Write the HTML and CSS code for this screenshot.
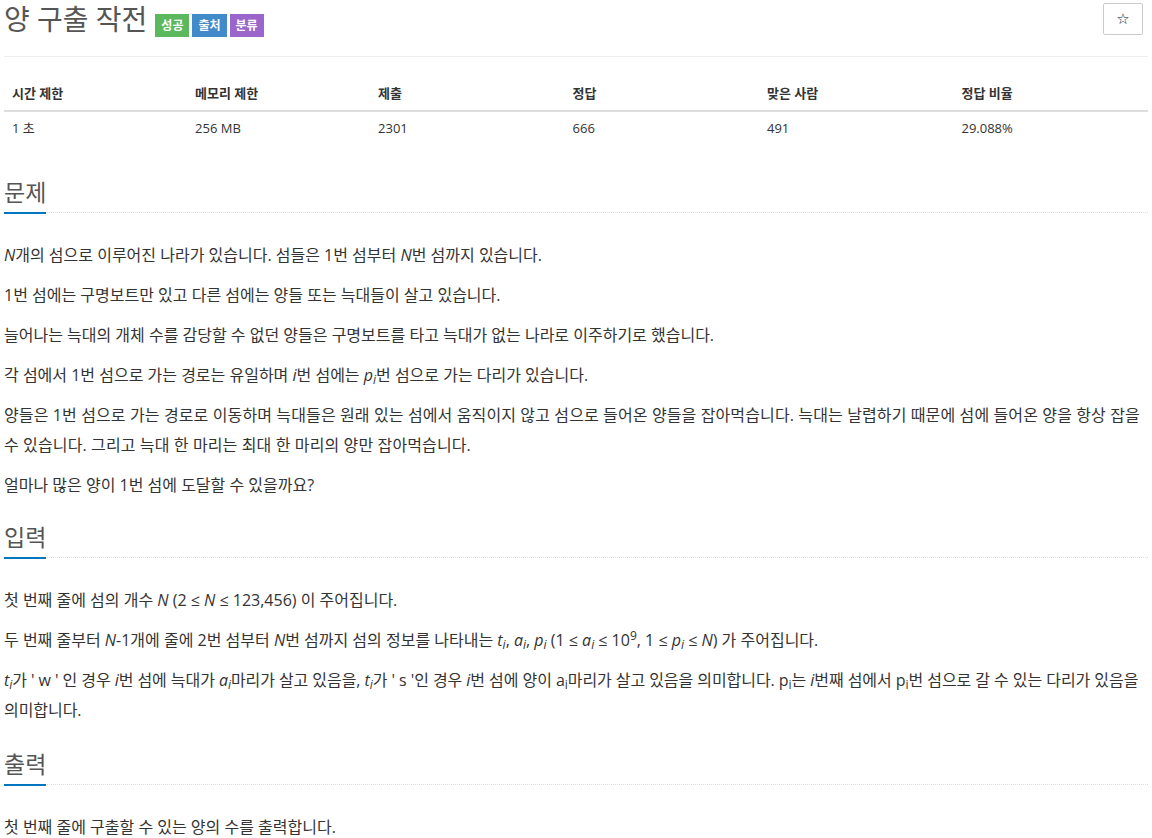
FILE: index.html
```html
<!DOCTYPE html>
<html>
<head>
    <title>양 구출 작전</title>
    <link rel="stylesheet" href="styles.css">
</head>
<body>
    <div class="container">
        <div class="page-header">
            <h1 class="problem-title">양 구출 작전</h1>
            <div class="labels">
                <span class="label label-success">성공</span>
                <span class="label label-info">출처</span>
                <span class="label label-purple">분류</span>
            </div>
            <button class="star-btn" title="즐겨찾기">☆</button>
        </div>

        <table class="problem-info">
            <thead>
                <tr>
                    <th class="w16">시간 제한</th>
                    <th class="w16">메모리 제한</th>
                    <th class="w17">제출</th>
                    <th class="w17">정답</th>
                    <th class="w17">맞은 사람</th>
                    <th class="w17">정답 비율</th>
                </tr>
            </thead>
            <tbody>
                <tr>
                    <td>1 초</td>
                    <td>256 MB</td>
                    <td>2301</td>
                    <td>666</td>
                    <td>491</td>
                    <td>29.088%</td>
                </tr>
            </tbody>
        </table>

        <section class="problem-section">
            <div class="headline">
                <h2>문제</h2>
            </div>
            <div class="problem-text">
                <p><i>N</i>개의 섬으로 이루어진 나라가 있습니다. 섬들은 1번 섬부터 <i>N</i>번 섬까지 있습니다.</p>
                <p>1번 섬에는 구명보트만 있고 다른 섬에는 양들 또는 늑대들이 살고 있습니다.</p>
                <p>늘어나는 늑대의 개체 수를 감당할 수 없던 양들은 구명보트를 타고 늑대가 없는 나라로 이주하기로 했습니다.</p>
                <p>각 섬에서 1번 섬으로 가는 경로는 유일하며 <i>i</i>번 섬에는 <i>p<sub>i</sub></i>번 섬으로 가는 다리가 있습니다.</p>
                <p class="loose">양들은 1번 섬으로 가는 경로로 이동하며 늑대들은 원래 있는 섬에서 움직이지 않고 섬으로 들어온 양들을 잡아먹습니다. 늑대는 날렵하기 때문에 섬에 들어온 양을 항상 잡을 수 있습니다. 그리고 늑대 한 마리는 최대 한 마리의 양만 잡아먹습니다.</p>
                <p>얼마나 많은 양이 1번 섬에 도달할 수 있을까요?</p>
            </div>
        </section>

        <section class="problem-section">
            <div class="headline">
                <h2>입력</h2>
            </div>
            <div class="problem-text">
                <p>첫 번째 줄에 섬의 개수 <i>N</i> (2 ≤ <i>N</i> ≤ 123,456) 이 주어집니다.</p>
                <p>두 번째 줄부터 <i>N</i>-1개에 줄에 2번 섬부터 <i>N</i>번 섬까지 섬의 정보를 나타내는 <i>t<sub>i</sub></i>, <i>a<sub>i</sub></i>, <i>p<sub>i</sub></i> (1 ≤ <i>a<sub>i</sub></i> ≤ 10<sup>9</sup>, 1 ≤ <i>p<sub>i</sub></i> ≤ <i>N</i>) 가 주어집니다.</p>
                <p class="snug"><i>t<sub>i</sub></i>가 ' w ' 인 경우 <i>i</i>번 섬에 늑대가 <i>a<sub>i</sub></i>마리가 살고 있음을, <i>t<sub>i</sub></i>가 ' s '인 경우 <i>i</i>번 섬에 양이 a<sub>i</sub>마리가 살고 있음을 의미합니다. p<sub>i</sub>는 <i>i</i>번째 섬에서 p<sub>i</sub>번 섬으로 갈 수 있는 다리가 있음을 의미합니다.</p>
            </div>
        </section>

        <section class="problem-section">
            <div class="headline">
                <h2>출력</h2>
            </div>
            <div class="problem-text">
                <p>첫 번째 줄에 구출할 수 있는 양의 수를 출력합니다.</p>
            </div>
        </section>
    </div>
</body>
</html>
```

FILE: styles.css
```css
body {
    margin: 0;
    font-family: "Open Sans", "Noto Sans CJK KR", sans-serif;
    color: #333;
    background: #fff;
}

.container {
    width: 1144px;
    margin-left: 4px;
}

.page-header {
    display: flex;
    align-items: center;
    padding: 3px 0 21px;
    border-bottom: 1px solid #eee;
    margin-bottom: 20px;
}

.problem-title {
    margin: 0;
    font-size: 28px;
    line-height: 32px;
    font-weight: normal;
    color: #555;
}

.labels {
    display: flex;
    gap: 3px;
    margin: 6px 0 -6px 8px;
}

.label {
    display: inline-flex;
    align-items: center;
    height: 23px;
    padding: 0 6px;
    font-size: 12px;
    font-weight: bold;
    color: #fff;
}

.label-success { background: #5cb85c; }
.label-info { background: #428bca; }
.label-purple { background: #9b66cc; }

.star-btn {
    margin-left: auto;
    margin-right: 5px;
    width: 40px;
    height: 32px;
    padding: 0;
    border: 1px solid #ccc;
    border-radius: 2px;
    background: #fff;
    font-family: "DejaVu Sans", sans-serif;
    font-size: 15px;
    color: #222;
    cursor: pointer;
}

.problem-info {
    width: 100%;
    border-collapse: collapse;
    margin-bottom: 20px;
    font-size: 13px;
    line-height: 17px;
}

.problem-info th,
.problem-info td {
    padding: 8px;
    text-align: left;
}

.problem-info th {
    font-weight: bold;
    border-bottom: 2px solid #ddd;
}

.w16 { width: 16%; }
.w17 { width: 17%; }

.problem-section {
    padding-top: 15px;
}

.headline {
    display: flex;
    border-bottom: 1px dotted #ddd;
    margin-bottom: 27px;
}

.headline h2 {
    margin: 0 0 -2px;
    padding-bottom: 8px;
    border-bottom: 2px solid #0076c0;
    font-size: 23px;
    line-height: 24px;
    font-weight: normal;
    color: #555;
}

.problem-text p {
    margin: 0 0 10px;
    font-size: 16px;
    line-height: 30px;
}

/* nudge line breaks to match the original wrapping */
.problem-text p.loose { letter-spacing: 0.12px; }
.problem-text p.snug { letter-spacing: -0.06px; margin-bottom: 12px; }

.problem-text sub,
.problem-text sup {
    position: relative;
    font-size: 75%;
    line-height: 0;
    vertical-align: baseline;
}

.problem-text sub { bottom: -0.25em; }
.problem-text sup { top: -0.5em; }
```
